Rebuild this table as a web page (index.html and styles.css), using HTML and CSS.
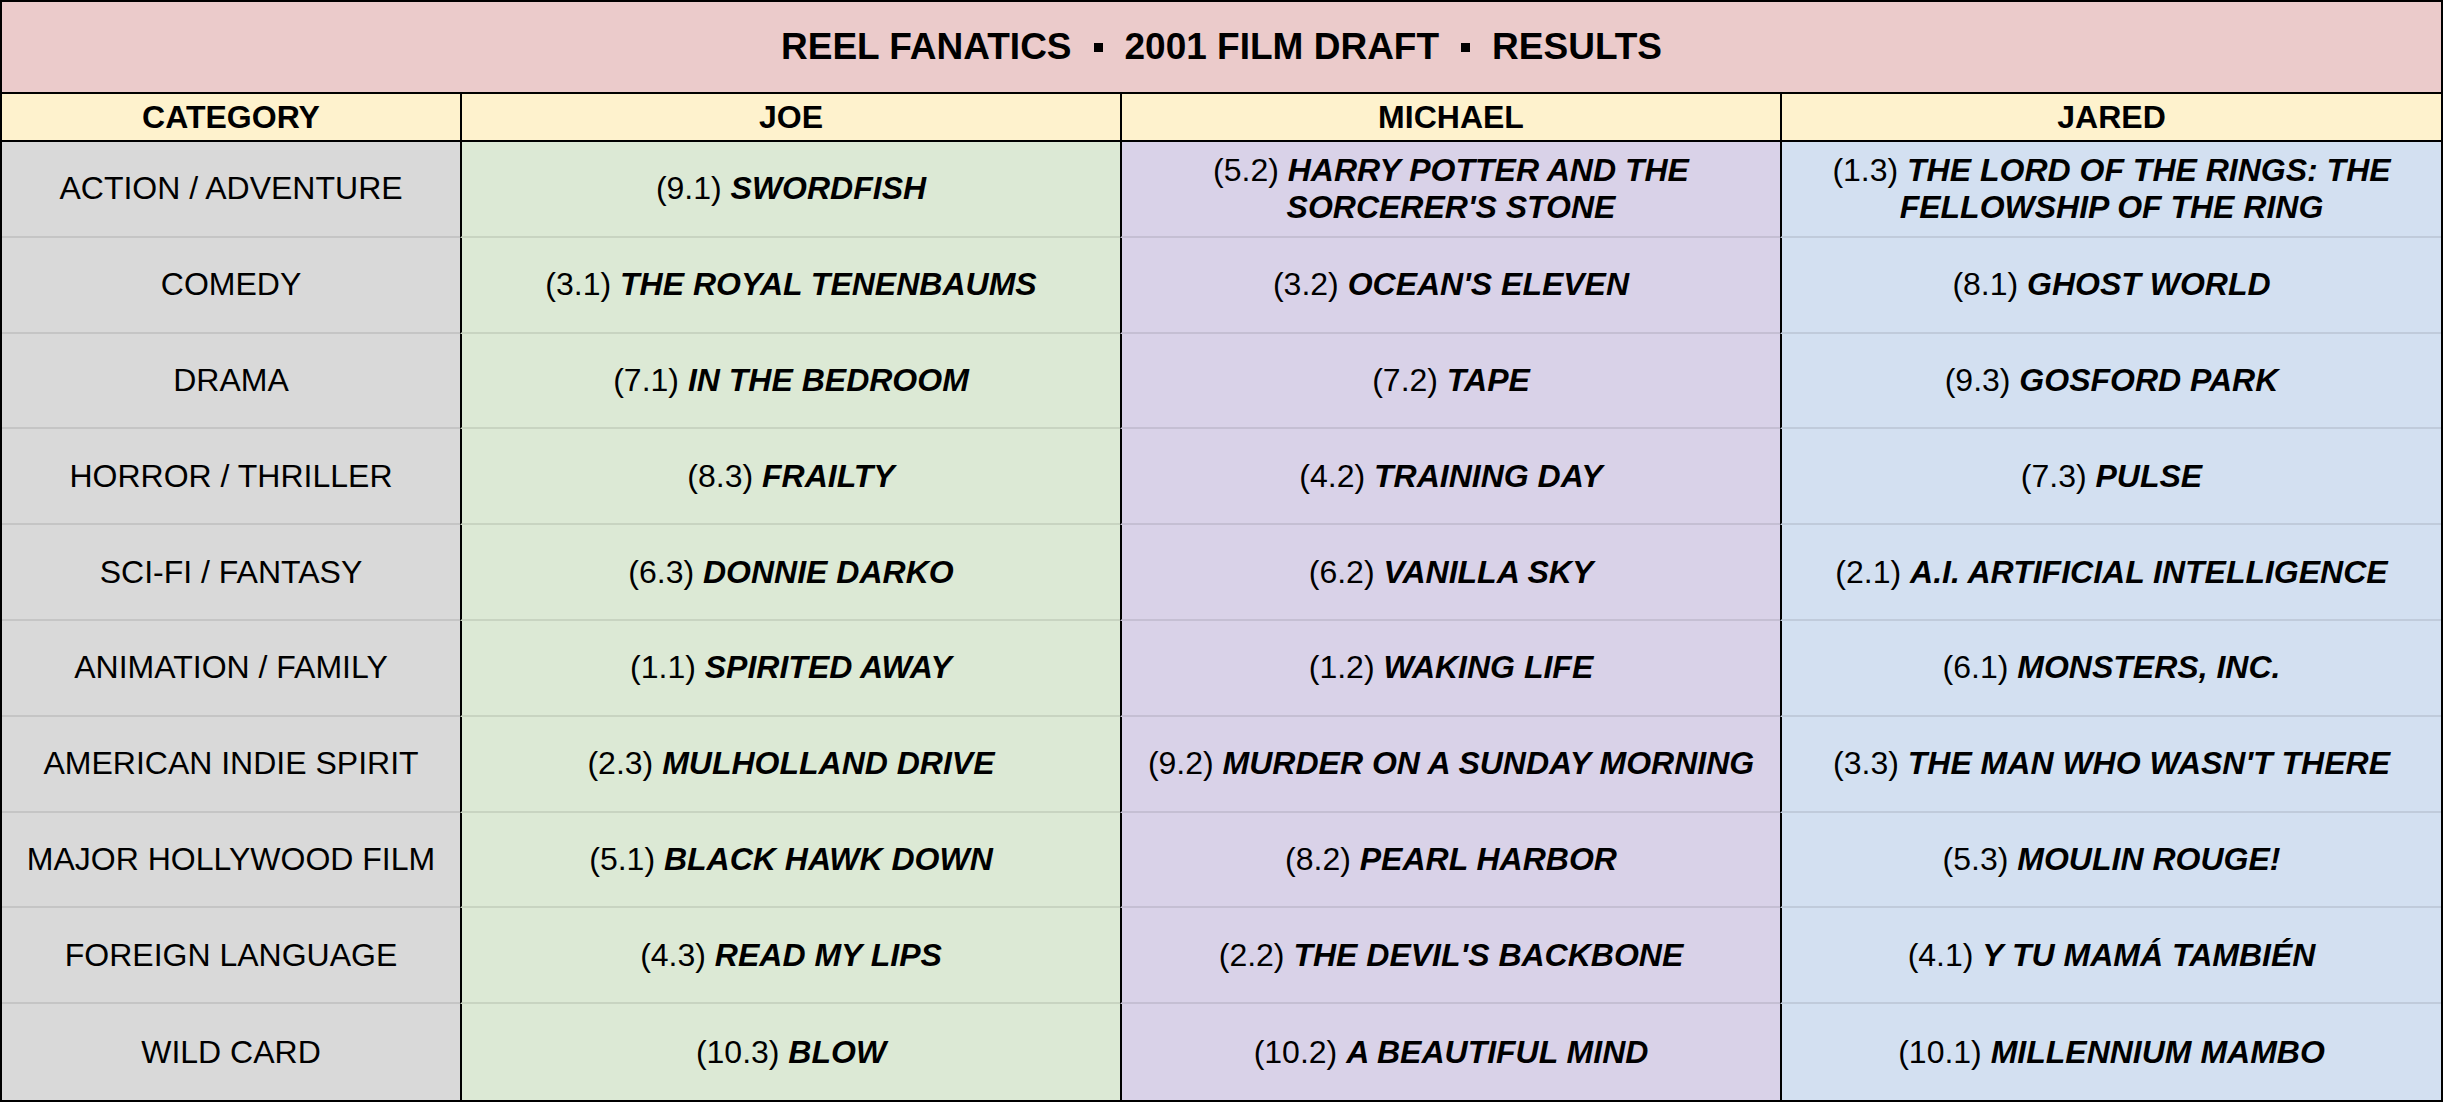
FILE: index.html
```html
<!DOCTYPE html>
<html>
<head>
<meta charset="utf-8">
<link rel="stylesheet" href="styles.css">
</head>
<body>
<div class="sheet">
  <div class="title">REEL FANATICS<span class="sep"></span>2001 FILM DRAFT<span class="sep"></span>RESULTS</div>
  <div class="grid">
    <div class="cell hd">CATEGORY</div>
    <div class="cell hd">JOE</div>
    <div class="cell hd">MICHAEL</div>
    <div class="cell hd">JARED</div>

    <div class="cell cat">ACTION / ADVENTURE</div>
    <div class="cell joe"><span>(9.1) <b>SWORDFISH</b></span></div>
    <div class="cell mic"><span>(5.2) <b>HARRY POTTER AND THE SORCERER'S STONE</b></span></div>
    <div class="cell jar"><span>(1.3) <b>THE LORD OF THE RINGS: THE FELLOWSHIP OF THE RING</b></span></div>

    <div class="cell cat">COMEDY</div>
    <div class="cell joe"><span>(3.1) <b>THE ROYAL TENENBAUMS</b></span></div>
    <div class="cell mic"><span>(3.2) <b>OCEAN'S ELEVEN</b></span></div>
    <div class="cell jar"><span>(8.1) <b>GHOST WORLD</b></span></div>

    <div class="cell cat">DRAMA</div>
    <div class="cell joe"><span>(7.1) <b>IN THE BEDROOM</b></span></div>
    <div class="cell mic"><span>(7.2) <b>TAPE</b></span></div>
    <div class="cell jar"><span>(9.3) <b>GOSFORD PARK</b></span></div>

    <div class="cell cat">HORROR / THRILLER</div>
    <div class="cell joe"><span>(8.3) <b>FRAILTY</b></span></div>
    <div class="cell mic"><span>(4.2) <b>TRAINING DAY</b></span></div>
    <div class="cell jar"><span>(7.3) <b>PULSE</b></span></div>

    <div class="cell cat">SCI-FI / FANTASY</div>
    <div class="cell joe"><span>(6.3) <b>DONNIE DARKO</b></span></div>
    <div class="cell mic"><span>(6.2) <b>VANILLA SKY</b></span></div>
    <div class="cell jar"><span>(2.1) <b>A.I. ARTIFICIAL INTELLIGENCE</b></span></div>

    <div class="cell cat">ANIMATION / FAMILY</div>
    <div class="cell joe"><span>(1.1) <b>SPIRITED AWAY</b></span></div>
    <div class="cell mic"><span>(1.2) <b>WAKING LIFE</b></span></div>
    <div class="cell jar"><span>(6.1) <b>MONSTERS, INC.</b></span></div>

    <div class="cell cat">AMERICAN INDIE SPIRIT</div>
    <div class="cell joe"><span>(2.3) <b>MULHOLLAND DRIVE</b></span></div>
    <div class="cell mic"><span>(9.2) <b>MURDER ON A SUNDAY MORNING</b></span></div>
    <div class="cell jar"><span>(3.3) <b>THE MAN WHO WASN'T THERE</b></span></div>

    <div class="cell cat">MAJOR HOLLYWOOD FILM</div>
    <div class="cell joe"><span>(5.1) <b>BLACK HAWK DOWN</b></span></div>
    <div class="cell mic"><span>(8.2) <b>PEARL HARBOR</b></span></div>
    <div class="cell jar"><span>(5.3) <b>MOULIN ROUGE!</b></span></div>

    <div class="cell cat">FOREIGN LANGUAGE</div>
    <div class="cell joe"><span>(4.3) <b>READ MY LIPS</b></span></div>
    <div class="cell mic"><span>(2.2) <b>THE DEVIL'S BACKBONE</b></span></div>
    <div class="cell jar"><span>(4.1) <b>Y TU MAMÁ TAMBIÉN</b></span></div>

    <div class="cell cat last">WILD CARD</div>
    <div class="cell joe last"><span>(10.3) <b>BLOW</b></span></div>
    <div class="cell mic last"><span>(10.2) <b>A BEAUTIFUL MIND</b></span></div>
    <div class="cell jar last"><span>(10.1) <b>MILLENNIUM MAMBO</b></span></div>
  </div>
</div>
</body>
</html>
```

FILE: styles.css
```css
html, body {
  margin: 0;
  padding: 0;
  background: #ffffff;
}

.sheet {
  width: 2443px;
  height: 1102px;
  box-sizing: border-box;
  border: 2px solid #000;
  display: flex;
  flex-direction: column;
  font-family: "Liberation Sans", Arial, sans-serif;
  color: #000;
}

.title {
  height: 90px;
  flex: none;
  border-bottom: 2px solid #000;
  background: #ebcbcb;
  display: flex;
  align-items: center;
  justify-content: center;
  font-weight: bold;
  font-size: 37px;
  white-space: nowrap;
}

.sep {
  display: inline-block;
  width: 9px;
  height: 9px;
  background: #000;
  margin: 0 22px;
}

.grid {
  flex: 1;
  display: grid;
  grid-template-columns: 458px 660px 660px 1fr;
  grid-template-rows: 48px repeat(10, 1fr);
  min-height: 0;
}

.cell {
  box-sizing: border-box;
  display: flex;
  align-items: center;
  justify-content: center;
  text-align: center;
  font-size: 32px;
  line-height: 37px;
  padding: 0 8px;
  border-bottom: 2px solid rgba(0, 0, 0, 0.09);
  min-height: 0;
}

.cell:not(:nth-child(4n+1)) {
  border-left: 2px solid #000;
}

.cell.last {
  border-bottom: none;
}

.hd {
  background: #fef2cd;
  font-weight: bold;
  font-size: 32px;
  border-bottom: 2px solid #000;
}

.cat { background: #d9d9d9; }
.joe { background: #dce9d5; }
.mic { background: #d9d2e8; }
.jar { background: #d3e0f1; }

.cell b {
  font-weight: bold;
  font-style: italic;
}
```
